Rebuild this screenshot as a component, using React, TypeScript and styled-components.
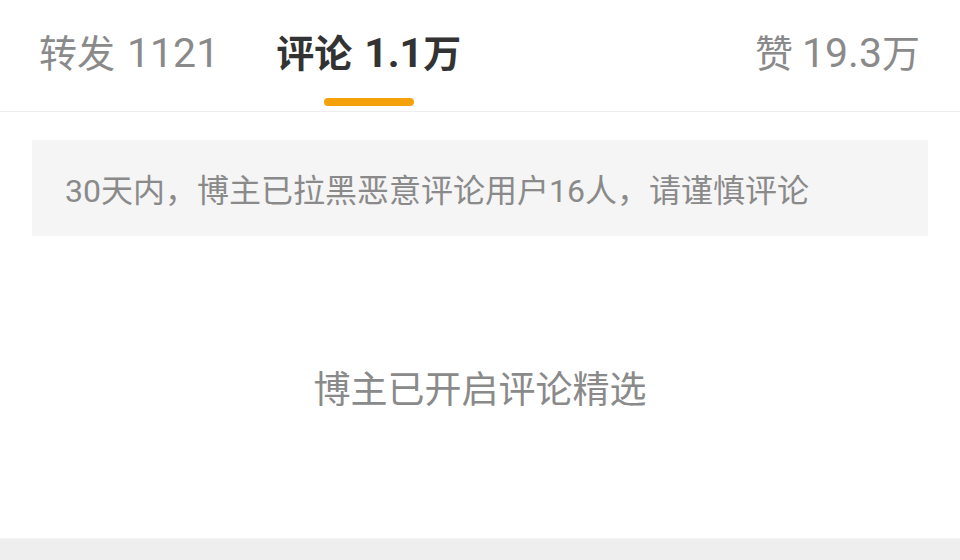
import React from "react";
import styled, { createGlobalStyle } from "styled-components";

const GlobalStyle = createGlobalStyle`
  html, body {
    margin: 0;
    padding: 0;
    background: #ffffff;
  }
  body {
    font-family: Roboto, "Noto Sans CJK SC", sans-serif;
  }
`;

const Page = styled.div`
  width: 960px;
  height: 560px;
  display: flex;
  flex-direction: column;
  overflow: hidden;
  background: #ffffff;
`;

const TabBar = styled.div`
  display: flex;
  align-items: flex-start;
  height: 112px;
  box-sizing: border-box;
  padding: 30px 40px 0 39px;
  border-bottom: 1px solid #eeeeee;
`;

const Tab = styled.div<{ $active?: boolean; $right?: boolean }>`
  display: flex;
  flex-direction: column;
  align-items: center;
  margin-left: ${(p) => (p.$right ? "auto" : "0")};
  margin-right: ${(p) => (p.$right ? "0" : "57px")};
  font-size: 38px;
  line-height: 46px;
  font-weight: ${(p) => (p.$active ? 700 : 400)};
  color: ${(p) => (p.$active ? "#333333" : "#8a8a8a")};
  white-space: nowrap;
`;

const Count = styled.span<{ $gap?: number }>`
  font-size: 41px;
  margin-left: ${(p) => p.$gap ?? 12}px;
`;

const Underline = styled.div`
  width: 90px;
  height: 8px;
  margin-top: 21px;
  border-radius: 4px;
  background: #f5a20a;
`;

const Notice = styled.div`
  margin: 28px 32px 0;
  height: 96px;
  display: flex;
  align-items: center;
  padding-left: 33px;
  background: #f5f5f5;
  color: #8a8a8a;
  font-size: 32px;
  white-space: nowrap;
`;

const Empty = styled.div`
  flex: 1;
  display: flex;
  align-items: center;
  justify-content: center;
  color: #8a8a8a;
  font-size: 37px;
`;

const BottomBar = styled.div`
  height: 21px;
  background: #eeeeee;
  border-top: 1px solid #f3f3f3;
`;

export default function App() {
  return (
    <>
      <GlobalStyle />
      <Page>
        <TabBar>
          <Tab>
            <span>
              转发<Count>1121</Count>
            </span>
          </Tab>
          <Tab $active>
            <span>
              评论<Count>1.1</Count>万
            </span>
            <Underline />
          </Tab>
          <Tab $right>
            <span>
              赞<Count $gap={9}>19.3</Count>万
            </span>
          </Tab>
        </TabBar>
        <Notice>30天内，博主已拉黑恶意评论用户16人，请谨慎评论</Notice>
        <Empty>博主已开启评论精选</Empty>
        <BottomBar />
      </Page>
    </>
  );
}
